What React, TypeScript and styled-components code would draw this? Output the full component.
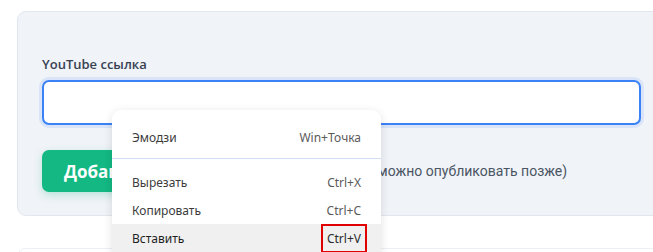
import React from 'react';
import styled, {createGlobalStyle} from 'styled-components';

const GlobalStyle = createGlobalStyle`
  html, body {
    margin: 0;
    padding: 0;
    background: #ffffff;
    overflow: hidden;
  }
  body {
    font-family: "Noto Sans", "Open Sans", sans-serif;
  }
`;

const Page = styled.div`
  position: relative;
  width: 653px;
  height: 252px;
  padding: 11px 0 0 17px;
  box-sizing: border-box;
  overflow: hidden;
`;

const Panel = styled.div`
  width: 650px;
  box-sizing: border-box;
  padding: 43px 25px 23px 24px;
  background: #f0f3f8;
  border: 1px solid #e2e7ef;
  border-radius: 9px;
`;

const Label = styled.label`
  display: block;
  font-family: "Open Sans", sans-serif;
  font-size: 13px;
  line-height: 18px;
  font-weight: 600;
  color: #374151;
  margin-bottom: 7px;
`;

const Input = styled.input`
  display: block;
  width: 100%;
  height: 45px;
  box-sizing: border-box;
  border: 2px solid #3b82f6;
  border-radius: 7px;
  background: #ffffff;
  box-shadow: 0 0 0 3px rgba(59, 130, 246, 0.13);
  outline: none;
`;

const Actions = styled.div`
  display: flex;
  align-items: center;
  gap: 16px;
  margin-top: 25px;
`;

const AddButton = styled.button`
  height: 42px;
  padding: 0 102px 0 22px;
  border: none;
  border-radius: 7px;
  background: #13b882;
  color: #ffffff;
  font-family: "Open Sans", sans-serif;
  font-size: 17px;
  font-weight: 700;
  box-shadow: 0 3px 8px rgba(16, 185, 129, 0.25);
`;

const Hint = styled.span`
  font-family: Roboto, "Noto Sans", sans-serif;
  font-size: 14px;
  color: #4b5563;
`;

const NextCard = styled.div`
  margin-top: 32px;
  width: 650px;
  height: 20px;
  border: 1px solid #eceff3;
  border-radius: 9px;
  background: #ffffff;
`;

const Menu = styled.div`
  position: absolute;
  left: 112px;
  top: 110px;
  width: 269px;
  padding-top: 12px;
  padding-bottom: 6px;
  background: #ffffff;
  border-radius: 9px;
  box-shadow: 0 2px 10px rgba(0, 0, 0, 0.12);
  font-family: "Noto Sans", sans-serif;
  font-size: 12px;
`;

const MenuItem = styled.div<{ $active?: boolean; $tall?: boolean }>`
  display: flex;
  justify-content: space-between;
  align-items: center;
  height: ${p => (p.$tall ? 30 : 28)}px;
  padding: 0 20px;
  color: ${p => (p.$active ? '#1f1f1f' : '#3c3c3c')};
  background: ${p => (p.$active ? '#f0f0f0' : 'transparent')};
`;

const Shortcut = styled.span<{ $marked?: boolean }>`
  color: #5a5a5a;
  ${p =>
    p.$marked &&
    `
    outline: 2px solid #e00000;
    outline-offset: 4px;
    color: #2a2a2a;
  `}
`;

const Separator = styled.div`
  height: 1px;
  background: #cfe0f6;
  margin: 6px 0 9px;
`;

const App = () => (
  <Page>
    <GlobalStyle />
    <Panel>
      <Label>YouTube ссылка</Label>
      <Input type="text" />
      <Actions>
        <AddButton>Добавить видео</AddButton>
        <Hint>(Видео можно опубликовать позже)</Hint>
      </Actions>
    </Panel>
    <NextCard />
    <Menu>
      <MenuItem $tall>
        <span>Эмодзи</span>
        <Shortcut>Win+Точка</Shortcut>
      </MenuItem>
      <Separator />
      <MenuItem>
        <span>Вырезать</span>
        <Shortcut>Ctrl+X</Shortcut>
      </MenuItem>
      <MenuItem>
        <span>Копировать</span>
        <Shortcut>Ctrl+C</Shortcut>
      </MenuItem>
      <MenuItem $active>
        <span>Вставить</span>
        <Shortcut $marked>Ctrl+V</Shortcut>
      </MenuItem>
    </Menu>
  </Page>
);

export default App;
